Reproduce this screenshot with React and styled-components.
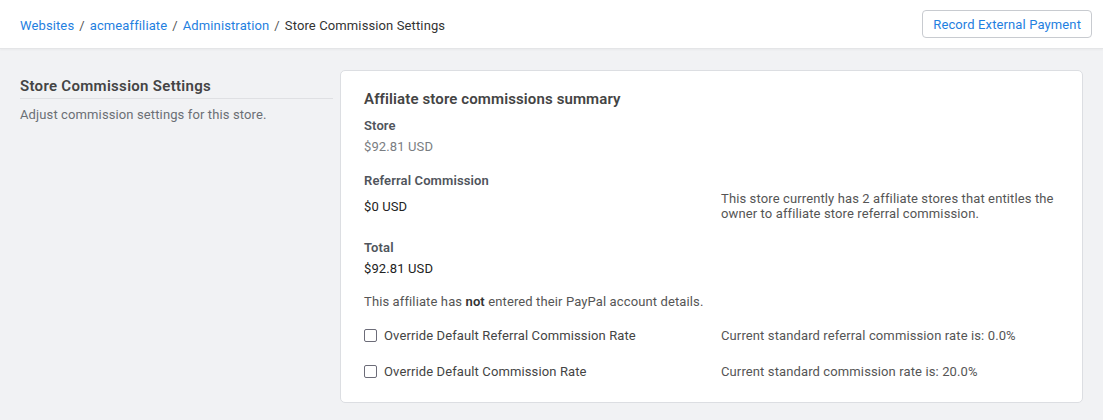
import styled, { createGlobalStyle } from 'styled-components';

const GlobalStyle = createGlobalStyle`
  html, body {
    margin: 0;
    padding: 0;
    background: #f1f2f4;
    font-family: Roboto, "Noto Sans", sans-serif;
    font-size: 13px;
    letter-spacing: 0.12px;
    color: #333;
  }
  * { box-sizing: border-box; }
`;

const Header = styled.header`
  height: 49px;
  background: #fff;
  border-bottom: 1px solid #e4e5e7;
  box-shadow: 0 1px 2px rgba(0, 0, 0, 0.04);
  display: flex;
  align-items: center;
  justify-content: space-between;
  padding: 0 11px 0 20px;
`;

const Breadcrumbs = styled.nav`
  display: flex;
  align-items: center;
  gap: 5px;
  padding-top: 3px;
  font-size: 13px;
  color: #333;
`;

const Crumb = styled.a`
  color: #1f80e0;
  text-decoration: none;
  cursor: pointer;
`;

const Sep = styled.span`
  color: #555;
`;

const Button = styled.button`
  height: 28px;
  padding: 0 10px;
  background: #fff;
  border: 1px solid #c8cbd0;
  border-radius: 4px;
  color: #1f80e0;
  font-family: inherit;
  font-size: 13px;
  letter-spacing: inherit;
  cursor: pointer;
`;

const Main = styled.main`
  display: grid;
  grid-template-columns: 313px 1fr;
  column-gap: 7px;
  padding: 21px 20px 18px 20px;
`;

const Aside = styled.div`
  padding-top: 6px;
`;

const AsideTitle = styled.h2`
  margin: 0;
  font-size: 15px;
  font-weight: 600;
  letter-spacing: 0.3px;
  color: #444;
  line-height: 20px;
  padding-bottom: 2px;
  border-bottom: 1px solid #dfe0e3;
`;

const AsideText = styled.p`
  margin: 6px 0 0;
  color: #6b6f75;
  line-height: 20px;
`;

const Card = styled.section`
  background: #fff;
  border: 1px solid #dcdee2;
  border-radius: 5px;
  padding: 18px 23px 20px 23px;
`;

const CardTitle = styled.h3`
  margin: 0 0 7px;
  font-size: 15px;
  font-weight: 600;
  color: #444;
  line-height: 20px;
`;

const Group = styled.div`
  margin-top: ${(p) => p.$gap || 0}px;
`;

const Label = styled.div`
  font-weight: 600;
  color: #50555c;
  line-height: 20px;
`;

const Value = styled.div`
  margin-top: 1px;
  line-height: 20px;
  color: ${(p) => (p.$muted ? '#7a7d82' : '#222')};
`;

const Row = styled.div`
  display: grid;
  grid-template-columns: 357px 1fr;
  align-items: center;
  min-height: ${(p) => p.$height || 21}px;
`;

const Note = styled.div`
  color: #555;
  line-height: 15px;
`;

const Para = styled.p`
  margin: 13px 0 0;
  color: #555;
  line-height: 20px;

  b { color: #333; font-weight: 600; }
`;

const CheckLabel = styled.label`
  display: flex;
  align-items: center;
  gap: 7px;
  color: #444;
  cursor: pointer;
`;

const Box = styled.input.attrs({ type: 'checkbox' })`
  appearance: none;
  margin: 0;
  width: 13px;
  height: 13px;
  border: 1.5px solid #6c6c78;
  border-radius: 2px;
  background: #fff;
`;

const OptionRow = styled(Row)`
  margin-top: ${(p) => p.$gap || 13}px;
`;

function App() {
  return (
    <>
      <GlobalStyle />
      <Header>
        <Breadcrumbs>
          <Crumb>Websites</Crumb>
          <Sep>/</Sep>
          <Crumb>acmeaffiliate</Crumb>
          <Sep>/</Sep>
          <Crumb>Administration</Crumb>
          <Sep>/</Sep>
          <span>Store Commission Settings</span>
        </Breadcrumbs>
        <Button>Record External Payment</Button>
      </Header>

      <Main>
        <Aside>
          <AsideTitle>Store Commission Settings</AsideTitle>
          <AsideText>Adjust commission settings for this store.</AsideText>
        </Aside>

        <Card>
          <CardTitle>Affiliate store commissions summary</CardTitle>

          <Group>
            <Label>Store</Label>
            <Value $muted>$92.81 USD</Value>
          </Group>

          <Group $gap={14}>
            <Label>Referral Commission</Label>
            <Row $height={30}>
              <Value>$0 USD</Value>
              <Note>
                This store currently has 2 affiliate stores that entitles the
                owner to affiliate store referral commission.
              </Note>
            </Row>
          </Group>

          <Group $gap={17}>
            <Label>Total</Label>
            <Value>$92.81 USD</Value>
          </Group>

          <Para>
            This affiliate has <b>not</b> entered their PayPal account details.
          </Para>

          <OptionRow>
            <CheckLabel>
              <Box />
              Override Default Referral Commission Rate
            </CheckLabel>
            <Note>Current standard referral commission rate is: 0.0%</Note>
          </OptionRow>

          <OptionRow $gap={15}>
            <CheckLabel>
              <Box />
              Override Default Commission Rate
            </CheckLabel>
            <Note>Current standard commission rate is: 20.0%</Note>
          </OptionRow>
        </Card>
      </Main>
    </>
  );
}

export default App;
